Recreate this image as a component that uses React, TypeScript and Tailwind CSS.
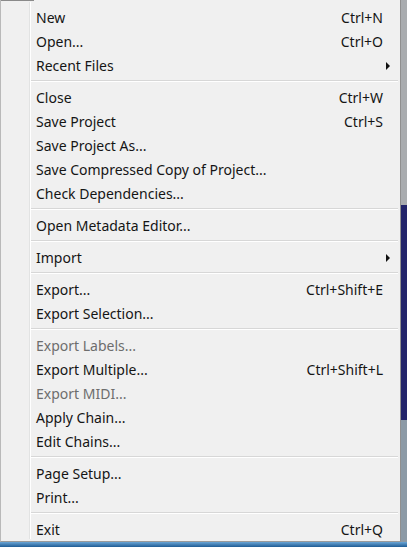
type Item =
  | { kind: 'sep' }
  | { kind: 'item'; label: string; shortcut?: string; submenu?: boolean; disabled?: boolean };

const items: Item[] = [
  { kind: 'item', label: 'New', shortcut: 'Ctrl+N' },
  { kind: 'item', label: 'Open...', shortcut: 'Ctrl+O' },
  { kind: 'item', label: 'Recent Files', submenu: true },
  { kind: 'sep' },
  { kind: 'item', label: 'Close', shortcut: 'Ctrl+W' },
  { kind: 'item', label: 'Save Project', shortcut: 'Ctrl+S' },
  { kind: 'item', label: 'Save Project As...' },
  { kind: 'item', label: 'Save Compressed Copy of Project...' },
  { kind: 'item', label: 'Check Dependencies...' },
  { kind: 'sep' },
  { kind: 'item', label: 'Open Metadata Editor...' },
  { kind: 'sep' },
  { kind: 'item', label: 'Import', submenu: true },
  { kind: 'sep' },
  { kind: 'item', label: 'Export...', shortcut: 'Ctrl+Shift+E' },
  { kind: 'item', label: 'Export Selection...' },
  { kind: 'sep' },
  { kind: 'item', label: 'Export Labels...', disabled: true },
  { kind: 'item', label: 'Export Multiple...', shortcut: 'Ctrl+Shift+L' },
  { kind: 'item', label: 'Export MIDI...', disabled: true },
  { kind: 'item', label: 'Apply Chain...' },
  { kind: 'item', label: 'Edit Chains...' },
  { kind: 'sep' },
  { kind: 'item', label: 'Page Setup...' },
  { kind: 'item', label: 'Print...' },
  { kind: 'sep' },
  { kind: 'item', label: 'Exit', shortcut: 'Ctrl+Q' },
];

export default function App() {
  return (
    <div className="w-[407px] h-[547px] flex flex-col bg-[#3a78b0] overflow-hidden" style={{ fontFamily: '"Noto Sans", "Open Sans", sans-serif' }}>
      <div className="flex h-[542px]">
        {/* menu */}
        <div className="relative w-[401px] h-full bg-[#f0f0f0] border-l border-[#b9b9b9] border-r border-r-[#8f8f8f] border-b border-b-[#9a9a9a] flex flex-col pt-[5px]">
          <div className="absolute top-0 left-0 w-[33px] h-px bg-[#8a8a8a]" />
          <div className="absolute top-[2px] bottom-[2px] left-[28px] w-px bg-[#e2e3e3]" />
          <div className="absolute top-[2px] bottom-[2px] left-[29px] w-px bg-white" />
          {items.map((it, i) =>
            it.kind === 'sep' ? (
              <div key={i} className="h-[8px] flex flex-col justify-center pl-[30px] pr-[2px]">
                <div className="h-px bg-[#d7d7d7]" />
                <div className="h-px bg-white" />
              </div>
            ) : (
              <div
                key={i}
                className={`h-[24px] flex items-center pt-[1px] pl-[35px] pr-[17px] text-[14px] ${it.disabled ? 'text-[#6d6d6d]' : 'text-[#151515]'}`}
              >
                <span className="flex-1 whitespace-nowrap">{it.label}</span>
                {it.shortcut && <span className="whitespace-nowrap">{it.shortcut}</span>}
                {it.submenu && (
                  <svg width="5" height="8" viewBox="0 0 5 8" className="-mr-[8px]">
                    <path d="M0 0 L4 4 L0 8 Z" fill="#111" />
                  </svg>
                )}
              </div>
            )
          )}
        </div>
        {/* window behind */}
        <div className="flex-1 flex flex-col">
          <div className="h-[205px] bg-[#a9acaf]" />
          <div className="h-[215px] bg-[#22246a]" />
          <div className="flex-1 bg-[#8c9aa6]" />
        </div>
      </div>
      <div className="flex-1 bg-gradient-to-b from-[#6aa6d6] to-[#1e5c94]" />
    </div>
  );
}
